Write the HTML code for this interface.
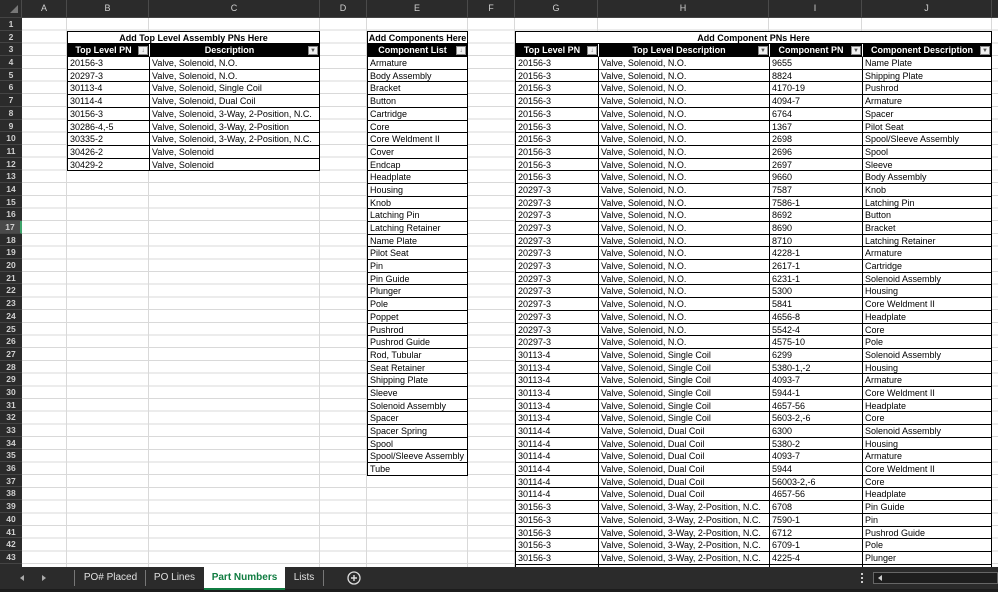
<!DOCTYPE html>
<html><head><meta charset="utf-8">
<style>
*{margin:0;padding:0;box-sizing:border-box}
body{width:998px;height:592px;overflow:hidden;background:#fff;font-family:"Liberation Sans",sans-serif;position:relative}
.colhdr{position:absolute;left:0;top:0;width:998px;height:18px;background:#2b2b2b;border-bottom:1px solid #444}
.colhdr div{position:absolute;top:0;height:17px;line-height:17px;text-align:center;color:#d0d0d0;font-size:9px;border-right:1px solid #4a4a4a}
.rowhdr{position:absolute;left:0;top:18px;width:22px;height:549px;background:#2b2b2b;overflow:hidden}
.rowhdr div{height:12.7px;line-height:12.7px;font-size:8.5px;color:#d0d0d0;text-align:center;border-bottom:1px solid #444;font-weight:bold}
.sheet{position:absolute;left:22px;top:18px;width:976px;height:549px;overflow:hidden;
 background-image:repeating-linear-gradient(to bottom,transparent 0,transparent 11.7px,#d9d9d9 11.7px,#d9d9d9 12.7px)}
.vl{position:absolute;top:0;width:1px;height:549px;background:#d9d9d9}
.t{position:absolute;border-left:1px solid #000;border-top:1px solid #000;background:#fff}
.r{display:flex;height:12.7px}
.c{height:12.7px;line-height:12px;font-size:9px;color:#000;padding-left:2px;border-right:1px solid #000;border-bottom:1px solid #000;white-space:nowrap;overflow:hidden;flex:none}
.ti{font-weight:bold;text-align:center;width:100%;padding:0}
.h .c{background:#000;color:#fff;font-weight:bold;text-align:center;position:relative;padding-right:12px;border-color:#fff #fff #000 #000}
.h .c:last-child{border-right-color:#000}
.fb{position:absolute;right:1px;top:1.5px;width:10px;height:9.5px;background:#f0f0f0;border:1px solid #888;color:#555;font-size:6px;line-height:8px;text-align:center;font-weight:normal}
.tabs{position:absolute;left:0;top:567px;width:998px;height:25px;background:#2b2b2b}
.tabs .bot{position:absolute;left:0;top:22px;width:998px;height:3px;background:#1c1c1c}
.tab{position:absolute;top:0;height:22px;line-height:21px;font-size:10px;color:#e0e0e0;text-align:center}
.sep{position:absolute;top:3px;width:1px;height:16px;background:#777}
</style></head><body>

<div class="colhdr">
<div style="left:0;width:22px"><svg width="22" height="17"><path d="M18 5 L18 13 L10 13 Z" fill="#777"/></svg></div>
<div style="left:22px;width:45px">A</div>
<div style="left:67px;width:82px">B</div>
<div style="left:149px;width:171px">C</div>
<div style="left:320px;width:47px">D</div>
<div style="left:367px;width:101px">E</div>
<div style="left:468px;width:47px">F</div>
<div style="left:515px;width:83px">G</div>
<div style="left:598px;width:171px">H</div>
<div style="left:769px;width:93px">I</div>
<div style="left:862px;width:130px">J</div>
<div style="left:992px;width:10px"></div>
</div>

<div class="rowhdr">
<div>1</div><div>2</div><div>3</div><div>4</div><div>5</div><div>6</div><div>7</div><div>8</div><div>9</div><div>10</div>
<div>11</div><div>12</div><div>13</div><div>14</div><div>15</div><div>16</div><div style="background:#4a4a4a;border-right:2px solid #3fa36b">17</div><div>18</div><div>19</div><div>20</div>
<div>21</div><div>22</div><div>23</div><div>24</div><div>25</div><div>26</div><div>27</div><div>28</div><div>29</div><div>30</div>
<div>31</div><div>32</div><div>33</div><div>34</div><div>35</div><div>36</div><div>37</div><div>38</div><div>39</div><div>40</div>
<div>41</div><div>42</div><div>43</div><div>44</div>
</div>

<div class="sheet">
<div class="vl" style="left:44px"></div>
<div class="vl" style="left:126px"></div>
<div class="vl" style="left:297px"></div>
<div class="vl" style="left:344px"></div>
<div class="vl" style="left:445px"></div>
<div class="vl" style="left:492px"></div>
<div class="vl" style="left:575px"></div>
<div class="vl" style="left:746px"></div>
<div class="vl" style="left:839px"></div>
<div class="vl" style="left:969px"></div>

<div class="t" style="left:45px;top:12.7px;width:253px">
<div class="r"><div class="c ti">Add Top Level Assembly PNs Here</div></div>
<div class="r h"><div class="c" style="width:82px">Top Level PN<span class="fb">&#8595;</span></div><div class="c" style="width:170px">Description<span class="fb">&#9660;</span></div></div>
<div class="r"><div class="c" style="width:82px">20156-3</div><div class="c" style="width:170px">Valve, Solenoid, N.O.</div></div>
<div class="r"><div class="c" style="width:82px">20297-3</div><div class="c" style="width:170px">Valve, Solenoid, N.O.</div></div>
<div class="r"><div class="c" style="width:82px">30113-4</div><div class="c" style="width:170px">Valve, Solenoid, Single Coil</div></div>
<div class="r"><div class="c" style="width:82px">30114-4</div><div class="c" style="width:170px">Valve, Solenoid, Dual Coil</div></div>
<div class="r"><div class="c" style="width:82px">30156-3</div><div class="c" style="width:170px">Valve, Solenoid, 3-Way, 2-Position, N.C.</div></div>
<div class="r"><div class="c" style="width:82px">30286-4,-5</div><div class="c" style="width:170px">Valve, Solenoid, 3-Way, 2-Position</div></div>
<div class="r"><div class="c" style="width:82px">30335-2</div><div class="c" style="width:170px">Valve, Solenoid, 3-Way, 2-Position, N.C.</div></div>
<div class="r"><div class="c" style="width:82px">30426-2</div><div class="c" style="width:170px">Valve, Solenoid</div></div>
<div class="r"><div class="c" style="width:82px">30429-2</div><div class="c" style="width:170px">Valve, Solenoid</div></div>
</div>

<div class="t" style="left:345px;top:12.7px;width:101px">
<div class="r"><div class="c ti">Add Components Here</div></div>
<div class="r h"><div class="c" style="width:100px">Component List<span class="fb">&#8595;</span></div></div>
<div class="r"><div class="c" style="width:100px">Armature</div></div>
<div class="r"><div class="c" style="width:100px">Body Assembly</div></div>
<div class="r"><div class="c" style="width:100px">Bracket</div></div>
<div class="r"><div class="c" style="width:100px">Button</div></div>
<div class="r"><div class="c" style="width:100px">Cartridge</div></div>
<div class="r"><div class="c" style="width:100px">Core</div></div>
<div class="r"><div class="c" style="width:100px">Core Weldment II</div></div>
<div class="r"><div class="c" style="width:100px">Cover</div></div>
<div class="r"><div class="c" style="width:100px">Endcap</div></div>
<div class="r"><div class="c" style="width:100px">Headplate</div></div>
<div class="r"><div class="c" style="width:100px">Housing</div></div>
<div class="r"><div class="c" style="width:100px">Knob</div></div>
<div class="r"><div class="c" style="width:100px">Latching Pin</div></div>
<div class="r"><div class="c" style="width:100px">Latching Retainer</div></div>
<div class="r"><div class="c" style="width:100px">Name Plate</div></div>
<div class="r"><div class="c" style="width:100px">Pilot Seat</div></div>
<div class="r"><div class="c" style="width:100px">Pin</div></div>
<div class="r"><div class="c" style="width:100px">Pin Guide</div></div>
<div class="r"><div class="c" style="width:100px">Plunger</div></div>
<div class="r"><div class="c" style="width:100px">Pole</div></div>
<div class="r"><div class="c" style="width:100px">Poppet</div></div>
<div class="r"><div class="c" style="width:100px">Pushrod</div></div>
<div class="r"><div class="c" style="width:100px">Pushrod Guide</div></div>
<div class="r"><div class="c" style="width:100px">Rod, Tubular</div></div>
<div class="r"><div class="c" style="width:100px">Seat Retainer</div></div>
<div class="r"><div class="c" style="width:100px">Shipping Plate</div></div>
<div class="r"><div class="c" style="width:100px">Sleeve</div></div>
<div class="r"><div class="c" style="width:100px">Solenoid Assembly</div></div>
<div class="r"><div class="c" style="width:100px">Spacer</div></div>
<div class="r"><div class="c" style="width:100px">Spacer Spring</div></div>
<div class="r"><div class="c" style="width:100px">Spool</div></div>
<div class="r"><div class="c" style="width:100px">Spool/Sleeve Assembly</div></div>
<div class="r"><div class="c" style="width:100px">Tube</div></div>
</div>

<div class="t" style="left:493px;top:12.7px;width:477px">
<div class="r"><div class="c ti">Add Component PNs Here</div></div>
<div class="r h"><div class="c" style="width:83px">Top Level PN<span class="fb">&#8595;</span></div><div class="c" style="width:171px">Top Level Description<span class="fb">&#9660;</span></div><div class="c" style="width:93px">Component PN<span class="fb">&#9660;</span></div><div class="c" style="width:129px">Component Description<span class="fb">&#9660;</span></div></div>
<div id="t3"></div>
</div>
</div>

<div class="tabs">
<div class="bot"></div>
<svg style="position:absolute;left:18px;top:6px" width="30" height="10"><path d="M6 2 L2 5 L6 8Z" fill="#aaa"/><path d="M24 2 L28 5 L24 8Z" fill="#aaa"/></svg>
<div class="sep" style="left:74px"></div>
<div class="tab" style="left:75px;width:71px">PO# Placed</div>
<div class="sep" style="left:145px"></div>
<div class="tab" style="left:146px;width:57px">PO Lines</div>
<div class="tab" style="left:204px;width:81px;background:#fff;color:#107c41;font-weight:bold;border-bottom:2px solid #107c41;height:23px">Part Numbers</div>
<div class="tab" style="left:285px;width:38px">Lists</div>
<div class="sep" style="left:323px"></div>
<svg style="position:absolute;left:347px;top:4px" width="14" height="14"><circle cx="7" cy="7" r="6" fill="none" stroke="#ddd" stroke-width="1.3"/><path d="M7 4V10M4 7H10" stroke="#ddd" stroke-width="1.4"/></svg>
<div style="position:absolute;left:861px;top:6px;width:2px;height:10px;border-left:2px dotted #ccc"></div>
<div style="position:absolute;left:873px;top:5px;width:125px;height:12px;background:#1e1e1e;border:1px solid #666"></div>
<svg style="position:absolute;left:876px;top:7px" width="8" height="8"><path d="M6 1 L2 4 L6 7Z" fill="#ccc"/></svg>
</div>

<script>
var d=[
["20156-3","Valve, Solenoid, N.O.","9655","Name Plate"],
["20156-3","Valve, Solenoid, N.O.","8824","Shipping Plate"],
["20156-3","Valve, Solenoid, N.O.","4170-19","Pushrod"],
["20156-3","Valve, Solenoid, N.O.","4094-7","Armature"],
["20156-3","Valve, Solenoid, N.O.","6764","Spacer"],
["20156-3","Valve, Solenoid, N.O.","1367","Pilot Seat"],
["20156-3","Valve, Solenoid, N.O.","2698","Spool/Sleeve Assembly"],
["20156-3","Valve, Solenoid, N.O.","2696","Spool"],
["20156-3","Valve, Solenoid, N.O.","2697","Sleeve"],
["20156-3","Valve, Solenoid, N.O.","9660","Body Assembly"],
["20297-3","Valve, Solenoid, N.O.","7587","Knob"],
["20297-3","Valve, Solenoid, N.O.","7586-1","Latching Pin"],
["20297-3","Valve, Solenoid, N.O.","8692","Button"],
["20297-3","Valve, Solenoid, N.O.","8690","Bracket"],
["20297-3","Valve, Solenoid, N.O.","8710","Latching Retainer"],
["20297-3","Valve, Solenoid, N.O.","4228-1","Armature"],
["20297-3","Valve, Solenoid, N.O.","2617-1","Cartridge"],
["20297-3","Valve, Solenoid, N.O.","6231-1","Solenoid Assembly"],
["20297-3","Valve, Solenoid, N.O.","5300","Housing"],
["20297-3","Valve, Solenoid, N.O.","5841","Core Weldment II"],
["20297-3","Valve, Solenoid, N.O.","4656-8","Headplate"],
["20297-3","Valve, Solenoid, N.O.","5542-4","Core"],
["20297-3","Valve, Solenoid, N.O.","4575-10","Pole"],
["30113-4","Valve, Solenoid, Single Coil","6299","Solenoid Assembly"],
["30113-4","Valve, Solenoid, Single Coil","5380-1,-2","Housing"],
["30113-4","Valve, Solenoid, Single Coil","4093-7","Armature"],
["30113-4","Valve, Solenoid, Single Coil","5944-1","Core Weldment II"],
["30113-4","Valve, Solenoid, Single Coil","4657-56","Headplate"],
["30113-4","Valve, Solenoid, Single Coil","5603-2,-6","Core"],
["30114-4","Valve, Solenoid, Dual Coil","6300","Solenoid Assembly"],
["30114-4","Valve, Solenoid, Dual Coil","5380-2","Housing"],
["30114-4","Valve, Solenoid, Dual Coil","4093-7","Armature"],
["30114-4","Valve, Solenoid, Dual Coil","5944","Core Weldment II"],
["30114-4","Valve, Solenoid, Dual Coil","56003-2,-6","Core"],
["30114-4","Valve, Solenoid, Dual Coil","4657-56","Headplate"],
["30156-3","Valve, Solenoid, 3-Way, 2-Position, N.C.","6708","Pin Guide"],
["30156-3","Valve, Solenoid, 3-Way, 2-Position, N.C.","7590-1","Pin"],
["30156-3","Valve, Solenoid, 3-Way, 2-Position, N.C.","6712","Pushrod Guide"],
["30156-3","Valve, Solenoid, 3-Way, 2-Position, N.C.","6709-1","Pole"],
["30156-3","Valve, Solenoid, 3-Way, 2-Position, N.C.","4225-4","Plunger"],
["30156-3","Valve, Solenoid, 3-Way, 2-Position, N.C.","6711","Poppet"]
];
var w=[83,171,93,129],h="";
d.forEach(function(r){h+='<div class="r">';r.forEach(function(v,i){h+='<div class="c" style="width:'+w[i]+'px">'+v+'</div>'});h+='</div>'});
document.getElementById("t3").outerHTML=h;
</script>
</body></html>
